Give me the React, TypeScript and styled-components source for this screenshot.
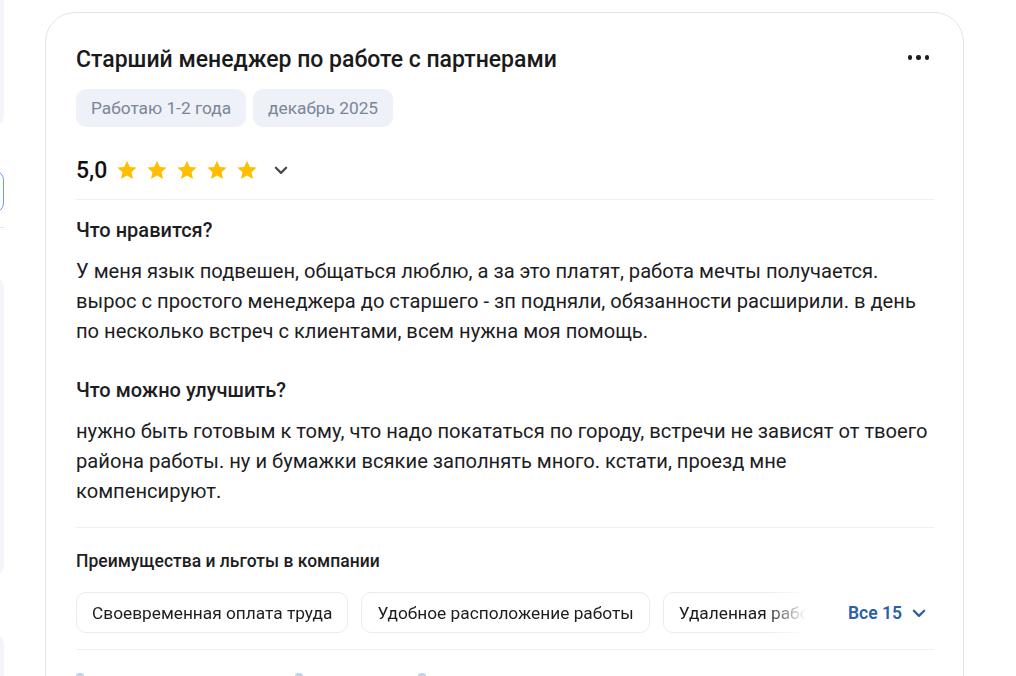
import React from "react";
import styled, { createGlobalStyle } from "styled-components";

const GlobalStyle = createGlobalStyle`
  body {
    margin: 0;
    background: #fff;
    font-family: Roboto, "Liberation Sans", sans-serif;
    color: #1d1d1f;
  }
`;

const perks = ["Своевременная оплата труда", "Удобное расположение работы", "Удаленная работа"];

const Star = () => (
  <svg width="22" height="22" viewBox="0 0 24 24">
    <path d="M12 1.8l3.1 6.9 7.4.7-5.6 5 1.7 7.4L12 17.9l-6.6 3.9 1.7-7.4-5.6-5 7.4-.7z" fill="#ffbf00" />
  </svg>
);

const Chevron = ({ color, size }: { color: string; size: number }) => (
  <svg width={size} height={size} viewBox="0 0 14 14" fill="none">
    <path d="M2.5 5l4.5 4.5L11.5 5" stroke={color} strokeWidth="2" strokeLinecap="round" strokeLinejoin="round" />
  </svg>
);

const App = () => {
  return (
    <>
      <GlobalStyle />
      <Page>
        <Sidebar>
          <SidePanel $top={-20} $height={150} />
          <SideButton />
          <SideLine />
          <SidePanel $top={45} $height={307} />
          <SidePanel $top={50} $height={120} />
        </Sidebar>
        <Main>
          <Card>
            <Header>
              <Title>Старший менеджер по работе с партнерами</Title>
              <MoreButton>
                <Dot />
                <Dot />
                <Dot />
              </MoreButton>
            </Header>
            <Tags>
              <Tag>Работаю 1-2 года</Tag>
              <Tag>декабрь 2025</Tag>
            </Tags>
            <RatingRow>
              <Score>5,0</Score>
              <Stars>
                {[0, 1, 2, 3, 4].map((i) => (
                  <Star key={i} />
                ))}
              </Stars>
              <Expand>
                <Chevron color="#4a4a4a" size={16} />
              </Expand>
            </RatingRow>
            <Divider $top={11} />
            <Section>
              <SectionTitle>Что нравится?</SectionTitle>
              <Text>
                У меня язык подвешен, общаться люблю, а за это платят, работа мечты получается. вырос с простого
                менеджера до старшего - зп подняли, обязанности расширили. в день по несколько встреч с клиентами, всем
                нужна моя помощь.
              </Text>
            </Section>
            <Section>
              <SectionTitle>Что можно улучшить?</SectionTitle>
              <Text>
                нужно быть готовым к тому, что надо покататься по городу, встречи не зависят от твоего района работы.
                ну и бумажки всякие заполнять много. кстати, проезд мне компенсируют.
              </Text>
            </Section>
            <Divider $top={21} />
            <PerksTitle>Преимущества и льготы в компании</PerksTitle>
            <PerksRow>
              <Chips>
                {perks.map((p) => (
                  <Chip key={p}>{p}</Chip>
                ))}
              </Chips>
              <AllButton>
                Все 15
                <Chevron color="#2d5fa6" size={16} />
              </AllButton>
            </PerksRow>
            <Divider $top={16} />
            <Footer>
              <FooterItem $width={219} />
              <FooterItem $width={123} />
              <FooterItem $width={80} />
            </Footer>
          </Card>
        </Main>
      </Page>
    </>
  );
};

export default App;

const Page = styled.div`
  display: flex;
  height: 676px;
  overflow: hidden;
`;

const Sidebar = styled.div`
  width: 4px;
  flex-shrink: 0;
  overflow: hidden;
  display: flex;
  flex-direction: column;
  align-items: flex-end;
`;

const SidePanel = styled.div<{ $top: number; $height: number }>`
  width: 300px;
  flex-shrink: 0;
  margin-top: ${(p) => p.$top}px;
  height: ${(p) => p.$height}px;
  background: #f4f5fb;
  border-radius: 16px;
`;

const SideButton = styled.div`
  width: 300px;
  flex-shrink: 0;
  margin-top: 40px;
  height: 41px;
  border: 1.5px solid #6b9bf0;
  border-radius: 10px;
`;

const SideLine = styled.div`
  width: 300px;
  flex-shrink: 0;
  margin-top: 14px;
  height: 1px;
  background: #e3e5ea;
`;

const Main = styled.div`
  padding: 12px 0 0 41px;
`;

const Card = styled.div`
  width: 858px;
  padding: 28px 29px 0 30px;
  border: 1px solid #e0e4ec;
  border-radius: 30px;
  background: #fff;
`;

const Header = styled.div`
  display: flex;
  align-items: center;
  justify-content: space-between;
  height: 36px;
`;

const Title = styled.h2`
  margin: 0;
  font-size: 23px;
  font-weight: 500;
  color: #1a1a1a;
`;

const MoreButton = styled.div`
  display: flex;
  gap: 4px;
  padding-right: 5px;
  margin-top: -3px;
`;

const Dot = styled.span`
  width: 4.5px;
  height: 4.5px;
  border-radius: 50%;
  background: #1d1d1f;
`;

const Tags = styled.div`
  display: flex;
  gap: 7px;
  margin-top: 12px;
`;

const Tag = styled.span`
  height: 38px;
  display: flex;
  align-items: center;
  padding: 0 15px;
  border-radius: 10px;
  background: #eef1f7;
  color: #7a8599;
  font-size: 17.3px;
`;

const RatingRow = styled.div`
  display: flex;
  align-items: center;
  margin-top: 25px;
  height: 36px;
`;

const Score = styled.span`
  font-size: 23px;
  font-weight: 500;
  color: #111;
  margin-right: 9px;
`;

const Stars = styled.div`
  display: flex;
  gap: 8px;
`;

const Expand = styled.span`
  display: flex;
  margin-left: 15px;
`;

const Divider = styled.div<{ $top?: number }>`
  height: 1px;
  background: #eef0f3;
  margin-top: ${(p) => p.$top ?? 10}px;
`;

const Section = styled.div`
  margin-top: 17px;
  & + & {
    margin-top: 31px;
  }
`;

const SectionTitle = styled.h3`
  margin: 0;
  font-size: 20px;
  font-weight: 500;
  line-height: 26px;
  color: #1d1d1f;
`;

const Text = styled.p`
  margin: 13px 0 0;
  font-size: 20.15px;
  line-height: 30px;
  color: #1d1d1f;
`;

const PerksTitle = styled.h4`
  margin: 22px 0 0;
  font-size: 17.5px;
  font-weight: 500;
  line-height: 22px;
  color: #1d1d1f;
`;

const PerksRow = styled.div`
  display: flex;
  align-items: center;
  margin-top: 20px;
`;

const Chips = styled.div`
  display: flex;
  gap: 13px;
  width: 730px;
  overflow: hidden;
  mask-image: linear-gradient(to right, #000 690px, transparent 730px);
`;

const Chip = styled.span`
  flex-shrink: 0;
  height: 39px;
  display: flex;
  align-items: center;
  padding: 0 15px;
  border: 1px solid #e8ebf2;
  border-radius: 10px;
  font-size: 17.3px;
  color: #1d1d1f;
  white-space: nowrap;
`;

const AllButton = styled.span`
  display: flex;
  align-items: center;
  gap: 9px;
  margin-left: 42px;
  font-size: 17.5px;
  font-weight: 600;
  color: #2d5fa6;
`;

const Footer = styled.div`
  display: flex;
  padding-top: 23px;
  height: 60px;
`;

const FooterItem = styled.span<{ $width: number }>`
  width: ${(p) => p.$width}px;
  &::before {
    content: "";
    display: block;
    width: 8px;
    height: 20px;
    border-radius: 3px;
    background: #c8d2e6;
  }
`;
